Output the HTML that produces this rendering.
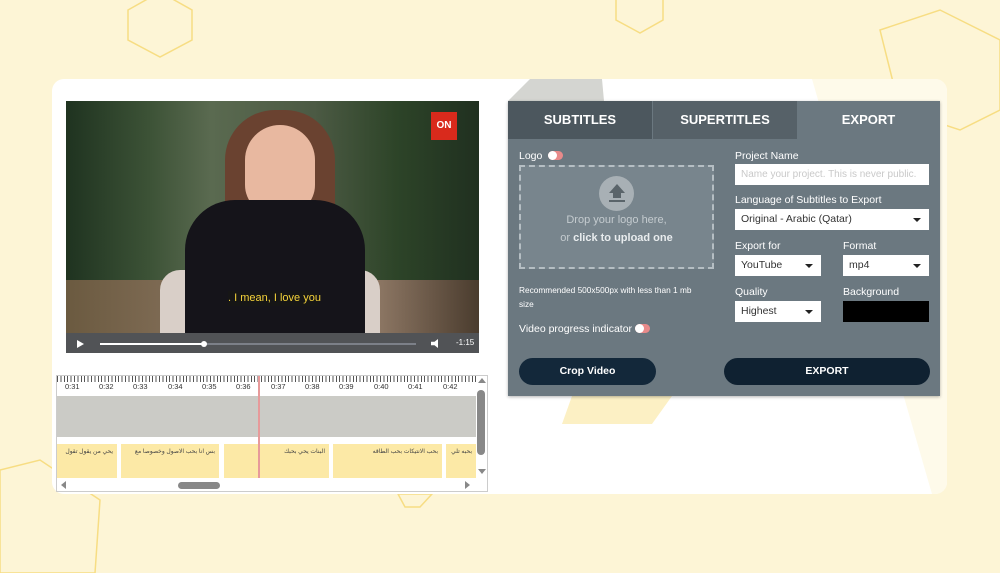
<!DOCTYPE html>
<html><head><meta charset="utf-8"><style>
*{box-sizing:border-box;margin:0;padding:0}
body{width:1000px;height:573px;overflow:hidden;background:#fdf5d6;font-family:"Liberation Sans","DejaVu Sans",sans-serif;position:relative}
.abs{position:absolute}
.card{left:52px;top:79px;width:895px;height:415px;background:#fff;border-radius:12px;overflow:hidden}
.panel{left:508px;top:101px;width:432px;height:295px;background:#6b7880;box-shadow:0 1px 3px rgba(0,0,0,.3)}
.tab{top:0;height:38px;color:#fff;font-weight:bold;font-size:13px;text-align:center;line-height:38px}
.lbl{color:#fff;font-size:10.5px;white-space:nowrap}
.inp{background:#fff;height:21px;font-size:10.5px;line-height:21px;padding-left:6px;color:#333;white-space:nowrap;overflow:hidden}
.inp .ar{position:absolute;right:8px;top:9px;border:4px solid transparent;border-top:4px solid #222;border-bottom:0}
.tog{width:15px;height:9px;border-radius:5px;background:#e88a8a}
.tog:after{content:"";position:absolute;left:0;top:0;width:9px;height:9px;border-radius:50%;background:#fff}
.btn{background:#13283a;color:#fff;font-weight:bold;font-size:10.5px;text-align:center;height:27px;line-height:27px;border-radius:14px}
.tick{font-size:7.5px;color:#333;top:382px}
.sub{top:444px;height:34px;background:#fce9a6;font-size:6px;color:#444;padding:4px;text-align:right;direction:rtl;white-space:nowrap;overflow:hidden}
</style></head><body>
<svg class="abs" style="left:0;top:0" width="1000" height="573">
<g fill="none" stroke="#f7dd83" stroke-width="1.5">
<polygon points="128,10 160,-8 192,10 192,40 160,57 128,40"/>
<polygon points="616,-10 663,-10 663,20 640,33 616,20"/>
<polygon points="880,30 940,10 1000,40 1000,110 960,130 900,110"/>
<polygon points="0,470 40,460 100,500 95,573 0,573"/>
<polygon points="398,494 432,494 420,507 405,507"/>
</g></svg>
<div class="abs card">
<svg class="abs" style="left:0;top:0" width="895" height="415">
<polygon points="760,0 895,0 895,415 880,415" fill="#fefaea"/>
<polygon points="478,0 550,0 552,22 456,22" fill="#d4d5d1"/>
<polygon points="520,317 620,317 600,345 510,345" fill="#fcf0c4"/>
</svg>
</div>
<!-- video -->
<div class="abs" style="left:66px;top:101px;width:413px;height:232px;background:linear-gradient(90deg,#1f3320 0%,#3c5236 20%,#5a6a50 35%,#4c5a44 60%,#2d4428 80%,#203020 100%)"></div>
<div class="abs" style="left:66px;top:280px;width:413px;height:53px;background:linear-gradient(90deg,#6b5a40,#8a7560 40%,#9c8470 70%,#4a3c2e)"></div>
<div class="abs" style="left:160px;top:270px;width:220px;height:63px;background:#d9cfc8;border-radius:20px 20px 0 0"></div>
<div class="abs" style="left:225px;top:110px;width:110px;height:150px;background:#6a4230;border-radius:50px 50px 20px 20px"></div>
<div class="abs" style="left:245px;top:125px;width:70px;height:90px;background:#e8b8a0;border-radius:35px 35px 30px 30px"></div>
<div class="abs" style="left:185px;top:200px;width:180px;height:133px;background:#15141a;border-radius:50px 50px 0 0"></div>
<div class="abs" style="left:228px;top:291px;width:90px;height:15px;background:#161616;color:#f5d33a;font-size:11px;text-align:center;line-height:15px;white-space:nowrap">. I mean, I love you</div>
<div class="abs" style="left:431px;top:112px;width:26px;height:28px;background:#d92a1c;color:#fff;font-size:10px;font-weight:bold;text-align:center;line-height:28px">ON</div>
<div class="abs" style="left:66px;top:333px;width:413px;height:20px;background:#515356"></div>
<div class="abs" style="left:77px;top:340px;border-left:7px solid #fff;border-top:4px solid transparent;border-bottom:4px solid transparent"></div>
<div class="abs" style="left:100px;top:343px;width:316px;height:2px;background:#7c8088"></div>
<div class="abs" style="left:100px;top:343px;width:104px;height:2px;background:#fff"></div>
<div class="abs" style="left:201px;top:341px;width:6px;height:6px;border-radius:50%;background:#fff"></div>
<div class="abs" style="left:431px;top:339px;width:10px;height:9px;background:#fff;clip-path:polygon(0 30%,35% 30%,70% 0,70% 100%,35% 70%,0 70%)"></div>
<div class="abs" style="left:456px;top:338px;color:#fff;font-size:8px">-1:15</div>
<!-- timeline -->
<div class="abs" style="left:56px;top:375px;width:432px;height:117px;background:#fff;border:1px solid #ccc"></div>
<div class="abs" style="left:57px;top:376px;width:419px;height:6px;background:repeating-linear-gradient(90deg,#555 0 1px,transparent 1px 3.4px)"></div>
<div class="abs tick" style="left:65px">0:31</div><div class="abs tick" style="left:99px">0:32</div><div class="abs tick" style="left:133px">0:33</div><div class="abs tick" style="left:168px">0:34</div><div class="abs tick" style="left:202px">0:35</div><div class="abs tick" style="left:236px">0:36</div><div class="abs tick" style="left:271px">0:37</div><div class="abs tick" style="left:305px">0:38</div><div class="abs tick" style="left:339px">0:39</div><div class="abs tick" style="left:374px">0:40</div><div class="abs tick" style="left:408px">0:41</div><div class="abs tick" style="left:443px">0:42</div>
<div class="abs" style="left:57px;top:396px;width:419px;height:41px;background:#cbcbc6"></div>
<div class="abs sub" style="left:57px;width:60px">يحي من يقول تقول</div>
<div class="abs sub" style="left:121px;width:98px">بس انا بحب الاصول وخصوصا مع</div>
<div class="abs sub" style="left:224px;width:105px">البنات يحي بحبك</div>
<div class="abs sub" style="left:333px;width:109px">بحب الانتيكات بحب الطاقه</div>
<div class="abs sub" style="left:446px;width:30px">بحبه تلي</div>
<div class="abs" style="left:258px;top:376px;width:2px;height:102px;background:#e79a9a"></div>
<div class="abs" style="left:477px;top:390px;width:8px;height:65px;background:#888;border-radius:4px"></div>
<div class="abs" style="left:178px;top:482px;width:42px;height:7px;background:#888;border-radius:4px"></div>
<div class="abs" style="left:478px;top:378px;border-bottom:5px solid #888;border-left:4px solid transparent;border-right:4px solid transparent"></div>
<div class="abs" style="left:478px;top:469px;border-top:5px solid #888;border-left:4px solid transparent;border-right:4px solid transparent"></div>
<div class="abs" style="left:61px;top:481px;border-right:5px solid #888;border-top:4px solid transparent;border-bottom:4px solid transparent"></div>
<div class="abs" style="left:465px;top:481px;border-left:5px solid #888;border-top:4px solid transparent;border-bottom:4px solid transparent"></div>
<!-- panel -->
<div class="abs panel">
<div class="abs tab" style="left:0;width:144px;background:#4c575e">SUBTITLES</div>
<div class="abs tab" style="left:145px;width:144px;background:#566168">SUPERTITLES</div>
<div class="abs tab" style="left:289px;width:143px;background:#6b7880">EXPORT</div>
<div class="abs lbl" style="left:11px;top:49px">Logo</div>
<div class="abs tog" style="left:40px;top:50px"></div>
<div class="abs" style="left:11px;top:64px;width:195px;height:104px;border:2px dashed #b5bec3;background:#78858d"></div>
<div class="abs" style="left:91px;top:75px;width:35px;height:35px;border-radius:50%;background:#a8b0b5"></div>
<div class="abs" style="left:101px;top:83px;border-bottom:9px solid #5a646a;border-left:8px solid transparent;border-right:8px solid transparent"></div>
<div class="abs" style="left:105px;top:91px;width:8px;height:6px;background:#5a646a"></div>
<div class="abs" style="left:101px;top:99px;width:16px;height:2px;background:#5a646a"></div>
<div class="abs" style="left:11px;top:110px;width:195px;text-align:center;color:#c4cbcf;font-size:11px;line-height:18px">Drop your logo here,<br>or <b style="color:#e8ecee">click to upload one</b></div>
<div class="abs lbl" style="left:11px;top:182px;font-size:8.3px;line-height:14px">Recommended 500x500px with less than 1 mb<br>size</div>
<div class="abs lbl" style="left:11px;top:222px">Video progress indicator</div>
<div class="abs tog" style="left:127px;top:223px"></div>
<div class="abs btn" style="left:11px;top:257px;width:137px">Crop Video</div>
<div class="abs btn" style="left:216px;top:257px;width:206px;background:#0f2131">EXPORT</div>
<div class="abs lbl" style="left:227px;top:49px">Project Name</div>
<div class="abs inp" style="left:227px;top:63px;width:194px;color:#c9c9c9;font-size:10px">Name your project. This is never public.</div>
<div class="abs lbl" style="left:227px;top:93px">Language of Subtitles to Export</div>
<div class="abs inp" style="left:227px;top:108px;width:194px">Original - Arabic (Qatar)<span class="ar"></span></div>
<div class="abs lbl" style="left:227px;top:139px">Export for</div>
<div class="abs inp" style="left:227px;top:154px;width:86px">YouTube<span class="ar"></span></div>
<div class="abs lbl" style="left:335px;top:139px">Format</div>
<div class="abs inp" style="left:335px;top:154px;width:86px">mp4<span class="ar"></span></div>
<div class="abs lbl" style="left:227px;top:185px">Quality</div>
<div class="abs inp" style="left:227px;top:200px;width:86px">Highest<span class="ar"></span></div>
<div class="abs lbl" style="left:335px;top:185px">Background</div>
<div class="abs" style="left:335px;top:200px;width:86px;height:21px;background:#000"></div>
</div>
</body></html>
